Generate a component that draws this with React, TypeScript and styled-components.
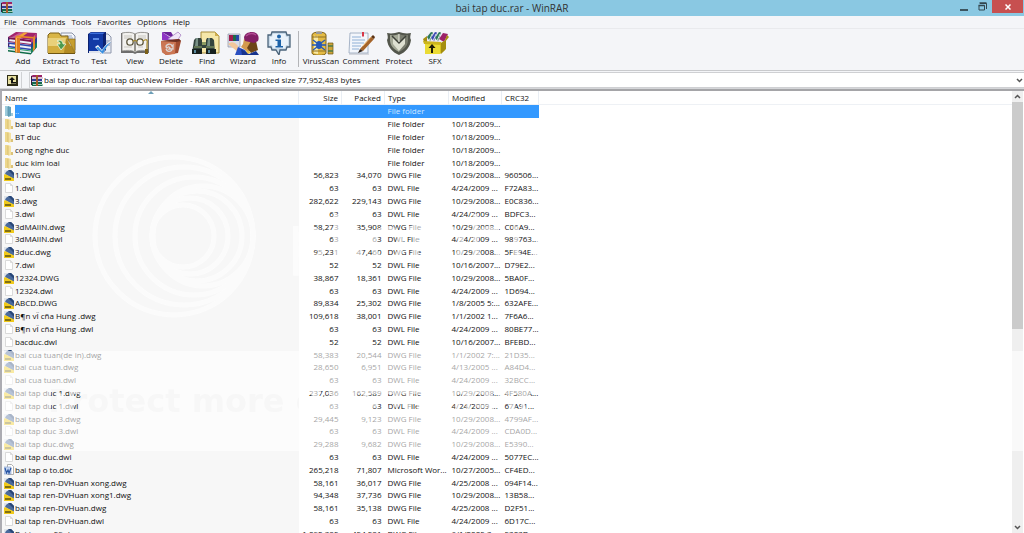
import React from "react";
import styled, { createGlobalStyle, css } from "styled-components";

const GlobalStyle = createGlobalStyle`
  *, *::before, *::after { box-sizing: border-box; }
  body {
    margin: 0;
    background: #f4f5f8;
    color: #111;
    font-family: "Open Sans", "Noto Sans", sans-serif;
    font-size: 8px;
    line-height: 12px;
  }
  button, input { font: inherit; color: inherit; }
`;

const Window = styled.div`
  display: flex;
  flex-direction: column;
  height: 100vh;
  overflow: hidden;
`;

const TitleBar = styled.header`
  display: grid;
  grid-template-columns: 1fr auto 1fr;
  height: 16px;
  flex: none;
  background: #8ac8e2;
`;

const AppIcon = styled.div`
  padding: 2px 1px;
  svg { display: block; }
`;

const Title = styled.h1`
  margin: 0;
  font-size: 10px;
  line-height: 16px;
  font-weight: 400;
  color: #333;
`;

const WindowButtons = styled.div`
  display: flex;
  justify-content: flex-end;
`;

const WindowButton = styled.button<{ $close?: boolean }>`
  width: ${(p) => (p.$close ? 31 : 19)}px;
  height: 13px;
  margin-right: ${(p) => (p.$close ? 1 : 0)}px;
  padding: 0;
  border: 0;
  display: flex;
  align-items: center;
  justify-content: center;
  background: ${(p) => (p.$close ? "#c75050" : "transparent")};
`;

const MenuBar = styled.nav`
  display: flex;
  flex: none;
  height: 12px;
  padding-left: 4px;
  gap: 6px;
`;

const MenuButton = styled.button`
  padding: 0;
  border: 0;
  background: none;
  line-height: 12px;
`;

const Toolbar = styled.div`
  display: flex;
  flex: none;
  height: 43px;
  padding-left: 5px;
  border-top: 1px solid #e9eaed;
  border-bottom: 1px solid #c9cacd;
`;

const ToolButton = styled.button<{ $wide?: boolean }>`
  width: ${(p) => (p.$wide ? 40 : 36)}px;
  padding: 2px 0 0;
  border: 0;
  background: none;
  display: flex;
  flex-direction: column;
  align-items: center;
  white-space: nowrap;
  svg { display: block; width: 32px; height: 24px; flex: none; }
`;

const ToolDivider = styled.div`
  width: 1px;
  margin: 2px 2px 3px 1px;
  background: #b4b5b8;
`;

const AddressBar = styled.div`
  display: flex;
  flex: none;
  height: 18px;
  padding-top: 1px;
  border-bottom: 1px solid #d5d6d9;
`;

const UpButton = styled.button`
  width: 22px;
  margin-right: 7px;
  padding: 0 0 0 4px;
  border: 0;
  border-right: 1px solid #d0d1d4;
  background: none;
  display: flex;
  align-items: center;
  justify-content: center;
`;

const PathField = styled.label`
  display: flex;
  flex: 1;
  align-items: center;
  gap: 1px;
  height: 16px;
  padding: 0 1px;
  border: 1px solid #cfd0d3;
  border-right: 0;
  background: #fff;
  svg { flex: none; }
`;

const PathInput = styled.input`
  flex: 1;
  min-width: 0;
  padding: 0 0 2px;
  border: 0;
  outline: 0;
  height: 14px;
  background: transparent;
`;

const PlainButton = styled.button`
  padding: 0;
  border: 0;
  background: none;
  display: flex;
  align-items: center;
  justify-content: center;
  height: 11px;
  flex: none;
`;

const Content = styled.main`
  display: flex;
  flex: 1;
  min-height: 0;
  position: relative;
  border-top: 2px solid #a5a5a8;
  border-left: 2px solid #acacb2;
  background: #fff;
  overflow: hidden;
`;

const ListPane = styled.div`
  flex: 1;
  overflow: hidden;
  background: linear-gradient(#eef1f5, #eef1f5) 0 13px / 100% 1px no-repeat;
`;

const FileTable = styled.table`
  width: 537px;
  table-layout: fixed;
  border-collapse: collapse;
  white-space: nowrap;
`;

const numeric = css`
  text-align: right;
  padding-right: 3px;
`;

const HeadCell = styled.th<{ $numeric?: boolean }>`
  height: 14px;
  padding: 0 0 0 3px;
  text-align: left;
  font-weight: 400;
  border-right: 1px solid #e9eef4;
  ${(p) => p.$numeric && numeric}
  button {
    padding: 0;
    border: 0;
    background: none;
    line-height: 12px;
    display: inline-block;
    vertical-align: top;
  }
`;

const SortMark = styled.svg`
  position: absolute;
  left: 146px;
  top: 0;
`;

const Row = styled.tr<{ $selected?: boolean }>`
  height: 13px;
  &:nth-child(5n) { height: 12px; }
  td { background: ${(p) => (p.$selected ? "#3399ff" : "transparent")}; }
  td:first-child { background: ${(p) => (p.$selected ? "#fff" : "#f7f7f7")}; }
  color: ${(p) => (p.$selected ? "#cfe6ff" : "#111")};
`;

const Cell = styled.td<{ $numeric?: boolean }>`
  padding: 0 0 0 3px;
  line-height: 12px;
  vertical-align: top;
  ${(p) => p.$numeric && numeric}
`;

const NameCell = styled(Cell)`
  padding-left: 2px;
`;

const FileName = styled.div<{ $selected?: boolean }>`
  display: flex;
  height: ${(p) => (p.$selected ? 13 : 12)}px;
  svg { flex: none; width: 10px; height: 12px; }
  span {
    flex: 1;
    margin-left: 1px;
    background: ${(p) => (p.$selected ? "#3399ff" : "transparent")};
  }
`;

const ScrollBar = styled.div`
  display: flex;
  flex-direction: column;
  width: 11px;
  margin-right: 1px;
  flex: none;
  background: #efefef;
`;

const ScrollTrack = styled.div`
  flex: 1;
`;

const ScrollThumb = styled.div`
  height: 54%;
  background: #cbcbcb;
`;

const Watermark = styled.svg`
  position: absolute;
  left: -2px;
  top: 0;
  width: calc(100% + 2px);
  height: 100%;
  pointer-events: none;
`;

/* ---------- drawings ---------- */

const Books = () => (
  <>
    <path d="M24 9 30 2v14l-6 7z" fill="#2a3f8f" />
    <path d="m24 9 6-7v4l-6 7z" fill="#b23a80" />
    <path d="m24 18 6-7v5l-6 7z" fill="#1c8257" />
    <path d="M1 6 9 1l21 1-6 7z" fill="#a3246b" />
    <path d="m5 6 7-4 4 .3L9 7z" fill="#c95796" />
    <path d="M1 6 24 9v14L1 20z" fill="#eef0f7" />
    <path d="m1 6 23 3v2L1 8z" fill="#7d1450" />
    <path d="M1 10.500 24 13.500" stroke="#8d1f5d" strokeWidth="1.200" />
    <path d="m1 12 23 3M1 15.500l23 3" stroke="#2c47ae" strokeWidth="1.400" />
    <path d="m1 17 23 3" stroke="#2e9a6b" strokeWidth="1" />
    <path d="m1 19 23 3v1.500L1 20.500z" fill="#0d6b46" />
    <path d="M1 6c2 2 2 3 0 5zM1 12c2 1 2 2 0 4z" fill="#43206a" />
    <path d="m8 6.800 9-5.400 4 .2L13 7.500z" fill="#f2a03a" />
    <path d="M8 6.800 13 7.500V22l-5-.7z" fill="#e07b22" />
    <path d="M9.500 7v14.500" stroke="#f7b95e" />
    <path d="M10 4.500 27 6l-1.500 1.500L8 6z" fill="#e88b27" />
    <path d="m26 6.500 2-2.200V18l-2 2.500z" fill="#e38a29" />
  </>
);

const toolIcons: Record<string, React.ReactNode> = {
  Add: <Books />,
  "Extract To": (
    <>
      <path d="M16 2h11l3 3v14H16z" fill="#f4f6fa" stroke="#8b93a8" />
      <path d="M20 5h7M20 7h8M20 9h8" stroke="#9aa9c8" />
      <path d="M3 4 5 2h9l2 3h7v17H3z" fill="#d9b546" stroke="#7c6118" />
      <path d="M3 7h18l9 15H3z" fill="#e9d07a" />
      <path d="M3 15h24l3 7H3z" fill="#d3ad3f" />
      <path d="m21 7 9 15H19z" fill="#b38b24" />
      <path d="M30 8v14l-7-14z" fill="#c79f30" stroke="#7c6118" strokeWidth=".6" />
      <path d="M3 22.500h27" stroke="#6f5511" />
      <path d="M12 10c3-2 6 0 6 3h3l-5 6-4-6h3c0-2-1-2-3-3z" fill="#4c9a4e" stroke="#f0f7e2" strokeWidth=".8" />
    </>
  ),
  Test: (
    <>
      <path d="M17 3h8l3 3v16H17z" fill="#e8ecf3" stroke="#8e96aa" />
      <path d="M22 10h5M22 12h5M22 14h5" stroke="#7683a8" />
      <path d="M5 3 8 1h15v18l-3 3H5z" fill="#0c2170" />
      <path d="M6 3h14v17H6z" fill="#123aa6" />
      <path d="M6 3 8 1.500h14L20 3z" fill="#3d70dd" />
      <path d="M10 7h6v2h-6z" fill="#5c8ae6" />
      <path d="M6 20h14v2H6z" fill="#dfe3ec" />
      <path d="m12 16 3-2 4 5c2-4 5-7 10-10-4 4-7 8-9 15z" fill="#fff" />
      <path d="m13 17 2-1.500 4 4.500c2-4 4-6 9-9-4 4-6 7-8 12z" fill="#3a8fdf" />
    </>
  ),
  View: (
    <>
      <path d="M2 2h1l1 18h10l2 1 2-1h10l1-18h1v20H18l-2 1-2-1H2z" fill="#6d6d6d" />
      <path d="M3 2c5-1 10-1 13 1 3-2 8-2 13-1v18c-5-1-10-1-13 1-3-2-8-2-13-1z" fill="#f2f1ee" stroke="#807f7b" strokeWidth=".8" />
      <path d="M16 3v17" stroke="#77746d" strokeWidth="1.500" />
      <path d="M5 5h8M5 7h8M19 5h8M19 7h8M5 16h8M19 16h5" stroke="#c9c7c1" />
      <g fill="#f7f6f0" stroke="#5b553e" strokeWidth="1.300">
        <circle cx="11" cy="11" r="3.200" />
        <circle cx="21" cy="11" r="3.200" />
      </g>
      <path d="M14 10.500q2-2 4 0M24 10c3-2 5-2 4 3v7" fill="none" stroke="#a78927" strokeWidth="1.200" />
      <path d="M26 18h3v5h-3z" fill="#7c6118" />
    </>
  ),
  Delete: (
    <>
      <path d="m7 1 12 8H7z" fill="#8e35c4" />
      <path d="m7 1 9 0 5 8z" fill="#6b2299" />
      <path d="m13 8 10-7 3 3-4 6z" fill="#f0e6f8" stroke="#a075bd" strokeWidth=".7" />
      <path d="M6 10 24 8l2 2-3 12-12 2-4-3z" fill="#a04c30" />
      <path d="M6 10h15l-1 13-9 1-4-3z" fill="#cb7653" />
      <path d="M6 10 24 8l2 2-5 1z" fill="#6c3021" />
      <path d="M11 16c0-3 5-4 6-1l1-1v4h-4l1-1c-1-2-2-1-3 0zM11 18c1 3 4 3 6 1" fill="none" stroke="#dcd6d6" strokeWidth="1.300" />
    </>
  ),
  Find: (
    <>
      <path d="M10 1h14l4 4v17H10z" fill="#f5e7a9" stroke="#a88d3a" />
      <path d="M24 1v4h4z" fill="#cfae4f" />
      <path d="M3 9 5 7h5l1 2v5h4V9l1-2h5l2 2 1 13h-9v-5h-4v5H1z" fill="#34443e" />
      <path d="M5 7h2v8H4zM17 7h2v8h-3z" fill="#789085" />
      <path d="M1 18h10v5H1zM15 18h10v5H15z" fill="#17211e" />
      <path d="M3 19h2v3H3zM17 19h2v3h-2z" fill="#5a8a9e" />
      <path d="M11 11h4v3h-4z" fill="#8d9c62" />
      <path d="M3 16h8M15 16h8" stroke="#91a86a" />
    </>
  ),
  Wizard: (
    <>
      <path d="M1 3h12v13H1z" fill="#d9dde8" stroke="#8c93a5" strokeWidth=".7" />
      <path d="M2 4h4v6H2z" fill="#a01c4e" />
      <path d="M6 4h3v6H6z" fill="#1c6b47" />
      <path d="M9 4h3v6H9z" fill="#2846a8" />
      <path d="M1 13c4-3 7-2 10 2v6z" fill="#f2c79a" />
      <path d="m17 8 9 1 1 9-6 3-7-5 2-3z" fill="#d39a4e" />
      <path d="M24 10h5l2 9-7 3-4-5z" fill="#6d4517" />
      <path d="M17 7c0-4 4-6 8-6 5 0 8 4 6 9l-4 2-9-2z" fill="#831f66" />
      <path d="M19 5c3-3 7-3 10-1" fill="none" stroke="#b24b94" strokeWidth="1.500" />
      <path d="m8 24 3-8 7 3 4 5z" fill="#2a4fc0" />
      <path d="m14 18 8 5 7-3 3 4H15z" fill="#17338d" />
      <path d="m18 19 3 4 3-2z" fill="#e9c14a" />
    </>
  ),
  Info: (
    <>
      <path d="M9 1 8 4H5v12h3l1 3h4l3 5 1-5h6l1-3h3V4h-3l-1-3z" fill="#c9dbea" stroke="#4a6379" strokeWidth="1.300" />
      <path d="M10 3 9 6H7v8h2l1 3h12l1-3h2V6h-2l-1-3z" fill="#e9f2fa" />
      <circle cx="16" cy="5.500" r="2" fill="#1d63a8" />
      <path d="M12.500 8.500H18v6.500h2v1.500h-7.500V15h2v-5h-2z" fill="#1d63a8" />
    </>
  ),
  VirusScan: (
    <>
      <path d="M7 4c0-4 14-4 14 0v18c0 3-14 3-14 0z" fill="#e4bb45" stroke="#7d6118" />
      <path d="M9 4c1 2 4 2 4 0v19c-2 0-4-1-4-1z" fill="#f8e9a4" />
      <path d="M7 6h14M7 20h14" stroke="#8e7024" />
      <path d="M11 1h6v2h-6z" fill="#9a9a9a" />
      <path d="M23 12h5v11h-5z" fill="#cda438" stroke="#6f5716" strokeWidth=".7" />
      <path d="M23 15h5M23 20h5" stroke="#497a4a" strokeWidth="1.500" />
      <ellipse cx="14" cy="14" rx="3" ry="4" fill="#2458b8" />
      <path d="m8 9 4 3m8-3-4 3M7 14h14M8 19l4-3m8 3-4-3" stroke="#2458b8" strokeWidth="1.300" />
    </>
  ),
  Comment: (
    <>
      <path d="M5 2h18v20H4z" fill="#f3f6fb" stroke="#93a3ba" strokeWidth=".8" />
      <path d="M7 6h9M7 9h13M7 12h12M7 15h9M7 18h7" stroke="#8fb0d6" />
      <path d="M17 1h2v5l-1-1-1 1z" fill="#d8394a" />
      <path d="m15 18 11-12 3 2-11 12z" fill="#a5642a" />
      <path d="m26 6 2-2 2 2-1 2z" fill="#5b3211" />
      <path d="m15 18-2 4 5-2z" fill="#2d2119" />
      <path d="m18 15 8-9" stroke="#e6b169" />
      <path d="M4 23h20" stroke="#b5bac4" />
    </>
  ),
  Protect: (
    <>
      <path d="M4 2c5 1 8 0 12-1 4 1 7 2 12 1-1 4-1 5 0 7-1 7-5 12-12 15C9 21 5 16 4 9c1-2 1-3 0-7z" fill="#53564c" />
      <path d="M7 4c4 1 6 0 9-1v18C10 18 7 14 7 9z" fill="#a5a997" />
      <path d="M25 4c-4 1-6 0-9-1v18c6-3 9-7 9-12z" fill="#7a7d6f" />
      <path d="m10 6 6 6 6-6v7l-6 7-6-7z" fill="#dfe1d2" />
      <path d="m9 5 7 7 7-7" fill="none" stroke="#3e4139" strokeWidth="1.500" />
      <path d="M16 3v8" stroke="#e9eadf" />
    </>
  ),
  SFX: (
    <>
      <path d="m7 5 4-4 16 1-2 9H8z" fill="#efe9f4" />
      <path d="m8 6 4-5 2 .5-3 9zM16 7l4-6 2 .5-3 9z" fill="#2d7a58" />
      <path d="m12 7 4-6 2 .5-3 9z" fill="#3d4cb4" />
      <path d="m20 8 4-6 5 1-4 8z" fill="#9c2268" />
      <path d="m13 3-3 7M17 3l-3 7M21 3l-3 7" stroke="#fff" strokeWidth=".8" />
      <path d="M4 8 8 5v6H5zM26 9l2-5 2 2-4 5z" fill="#a78f12" />
      <path d="m6 12 16 0 5-3-1 10-5 4-15-1z" fill="#d6bf1d" />
      <path d="M6 12h15v11H6z" fill="#eadb34" />
      <path d="m4 10 18 1v3L5 13z" fill="#ccb51c" />
      <path d="m22 12 5-3v9l-5 5z" fill="#a48e0f" />
      <path d="m13 13 3.500 4H14v5h-2v-5H9.500z" fill="#1d1a06" />
    </>
  ),
};

const BooksIcon = () => (
  <svg width="12" height="11" viewBox="0 0 12 11" aria-hidden="true">
    <path d="M0 1 2 0h9v3H1z" fill="#9b2367" />
    <path d="M1 2h11v2H1z" fill="#d9c4d3" />
    <path d="M0 4h11v2H1z" fill="#2c3f96" />
    <path d="M1 6h11v1H1z" fill="#c9cfe6" />
    <path d="M0 7h11v3l1 1H1z" fill="#12684b" />
    <path d="M2 9h10v1H2z" fill="#a9cdb9" />
    <path d="M5 0h2v11H5z" fill="#a35a2a" />
    <path d="M0 1h1v9H0z" fill="#3b1c3f" />
  </svg>
);

type Kind = "up" | "folder" | "dwg" | "dwl" | "doc";

const FileIcon = ({ kind }: { kind: Kind }) => (
  <svg viewBox="0 0 10 12" aria-hidden="true">
    {(kind === "up" || kind === "folder") && (
      <>
        <path d="M1 1h4v10H1z" fill={kind === "up" ? "#9ccbdc" : "#edd78c"} />
        <path d="M4 1l3 1v9l-3 1z" fill={kind === "up" ? "#65a3bd" : "#f3e0a0"} />
        <path d="M4 2v9" stroke={kind === "up" ? "#5b93a8" : "#d3b764"} strokeWidth=".8" />
        <path d="M7 8h2v3H7z" fill={kind === "up" ? "#9fc8da" : "#dcc379"} />
      </>
    )}
    {kind === "dwg" && (
      <>
        <path d="M0 1h7l3 3v8H0z" fill="#dfe4ea" />
        <path d="M1 5c1-3 3-4 6-4l3 3v6z" fill="#4a6a9c" />
        <path d="M4 1h3l3 3v3z" fill="#284677" />
        <path d="M0 6l1-1 9 4.500V12H0z" fill="#f0ca1b" />
        <path d="M1 10h6" stroke="#5d5210" strokeWidth="1.500" />
      </>
    )}
    {kind === "dwl" && (
      <path d="M1.500 1.500h5l2 2v7h-7zM6.500 1.500v2h2" fill="#fff" stroke="#d2d2d2" strokeWidth=".8" />
    )}
    {kind === "doc" && (
      <>
        <path d="M3.500.5h4l2 2v8h-6z" fill="#fff" stroke="#9c9c9c" strokeWidth=".8" />
        <path d="M0 3h7v7H0z" fill="#c8d8f1" stroke="#7f9cc9" strokeWidth=".6" />
        <path d="m1 4 1.500 5L4 6l1 3 2-5" fill="none" stroke="#2754a3" strokeWidth="1.200" />
      </>
    )}
  </svg>
);

const Chevron = ({ up }: { up?: boolean }) => (
  <svg width="7" height="5" viewBox="0 0 7 5" aria-hidden="true">
    <path d={up ? "M1 4l2.500-2.500L6 4" : "M1 1l2.500 2.500L6 1"} fill="none" stroke="#555" strokeWidth="1.500" />
  </svg>
);

/* ---------- data ---------- */

type Entry = [Kind, string, string, string, string, string, string];

const entries: Entry[] = [
  ["up", "..", "", "", "File folder", "", ""],
  ["folder", "bai tap duc", "", "", "File folder", "10/18/2009...", ""],
  ["folder", "BT duc", "", "", "File folder", "10/18/2009...", ""],
  ["folder", "cong nghe duc", "", "", "File folder", "10/18/2009...", ""],
  ["folder", "duc kim loai", "", "", "File folder", "10/18/2009...", ""],
  ["dwg", "1.DWG", "56,823", "34,070", "DWG File", "10/29/2008...", "960506..."],
  ["dwl", "1.dwl", "63", "63", "DWL File", "4/24/2009 ...", "F72A83..."],
  ["dwg", "3.dwg", "282,622", "229,143", "DWG File", "10/29/2008...", "E0C836..."],
  ["dwl", "3.dwl", "63", "63", "DWL File", "4/24/2009 ...", "BDFC3..."],
  ["dwg", "3dMAIIN.dwg", "58,273", "35,908", "DWG File", "10/29/2008...", "C06A9..."],
  ["dwl", "3dMAIIN.dwl", "63", "63", "DWL File", "4/24/2009 ...", "989763..."],
  ["dwg", "3duc.dwg", "95,231", "47,460", "DWG File", "10/29/2008...", "5FE94E..."],
  ["dwl", "7.dwl", "52", "52", "DWL File", "10/16/2007...", "D79E2..."],
  ["dwg", "12324.DWG", "38,867", "18,361", "DWG File", "10/29/2008...", "5BA0F..."],
  ["dwl", "12324.dwl", "63", "63", "DWL File", "4/24/2009 ...", "1D694..."],
  ["dwg", "ABCD.DWG", "89,834", "25,302", "DWG File", "1/8/2005 5:...", "632AFE..."],
  ["dwg", "B¶n vÏ cña Hung .dwg", "109,618", "38,001", "DWG File", "1/1/2002 1...", "7F6A6..."],
  ["dwl", "B¶n vÏ cña Hung .dwl", "63", "63", "DWL File", "4/24/2009 ...", "80BE77..."],
  ["dwl", "bacduc.dwl", "52", "52", "DWL File", "10/16/2007...", "BFEBD..."],
  ["dwg", "bai cua tuan(de in).dwg", "58,383", "20,544", "DWG File", "1/1/2002 7:...", "21D35..."],
  ["dwg", "bai cua tuan.dwg", "28,650", "6,951", "DWG File", "4/13/2005 ...", "A84D4..."],
  ["dwl", "bai cua tuan.dwl", "63", "63", "DWL File", "4/24/2009 ...", "32BCC..."],
  ["dwg", "bai tap duc 1.dwg", "237,036", "162,589", "DWG File", "10/29/2008...", "4F580A..."],
  ["dwl", "bai tap duc 1.dwl", "63", "63", "DWL File", "4/24/2009 ...", "67A91..."],
  ["dwg", "bai tap duc 3.dwg", "29,445", "9,123", "DWG File", "10/29/2008...", "4799AF..."],
  ["dwl", "bai tap duc 3.dwl", "63", "63", "DWL File", "4/24/2009 ...", "CDA0D..."],
  ["dwg", "bai tap duc.dwg", "29,288", "9,682", "DWG File", "10/29/2008...", "E5390..."],
  ["dwl", "bai tap duc.dwl", "63", "63", "DWL File", "4/24/2009 ...", "5077EC..."],
  ["doc", "bai tap o to.doc", "265,218", "71,807", "Microsoft Wor...", "10/27/2005...", "CF4ED..."],
  ["dwg", "bai tap ren-DVHuan xong.dwg", "58,161", "36,017", "DWG File", "4/25/2008 ...", "094F14..."],
  ["dwg", "bai tap ren-DVHuan xong1.dwg", "94,348", "37,736", "DWG File", "10/29/2008...", "13B58..."],
  ["dwg", "bai tap ren-DVHuan.dwg", "58,161", "35,138", "DWG File", "4/25/2008 ...", "D2F51..."],
  ["dwl", "bai tap ren-DVHuan.dwl", "63", "63", "DWL File", "4/24/2009 ...", "6D17C..."],
  ["dwg", "Bai tap co 59.dwg", "1,092,385", "454,581", "DWG File", "6/1/2005 3:...", "5303D..."],
];

const columns: { label: string; width?: number; numeric?: boolean }[] = [
  { label: "Name" },
  { label: "Size", width: 43, numeric: true },
  { label: "Packed", width: 43, numeric: true },
  { label: "Type", width: 64 },
  { label: "Modified", width: 53 },
  { label: "CRC32", width: 37 },
];

const menus = ["File", "Commands", "Tools", "Favorites", "Options", "Help"];
const mainTools = ["Add", "Extract To", "Test", "View", "Delete", "Find", "Wizard", "Info"];
const extraTools = ["VirusScan", "Comment", "Protect", "SFX"];

/* Circles sharing the right edge, then circles sharing the left edge: [cx, r] */
const rings = [[174, 79], [184, 69], [194, 59], [203, 50], [183, 31], [190, 38], [197, 45]];

const Tool = ({ name }: { name: string }) => (
  <ToolButton type="button" $wide={name === "Extract To" || name === "Comment" || name === "VirusScan"}>
    <svg viewBox="0 0 32 24" aria-hidden="true">{toolIcons[name]}</svg>
    <span>{name}</span>
  </ToolButton>
);

export default function App() {
  return (
    <Window>
      <GlobalStyle />
      <TitleBar>
        <AppIcon><BooksIcon /></AppIcon>
        <Title>bai tap duc.rar - WinRAR</Title>
        <WindowButtons>
          <WindowButton type="button" aria-label="Minimize">
            <svg width="8" height="11" viewBox="0 0 8 11"><path d="M0 9h8" stroke="#3c5560" strokeWidth="2" /></svg>
          </WindowButton>
          <WindowButton type="button" aria-label="Restore">
            <svg width="9" height="9" viewBox="0 0 9 9">
              <path d="M2 1.500h6.500V7M1 3.500h5.500v4.500H1z" fill="none" stroke="#33464f" />
              <path d="M1.500 1h7M.5 3.500h6" stroke="#33464f" strokeWidth="1.500" />
            </svg>
          </WindowButton>
          <WindowButton type="button" aria-label="Close" $close>
            <svg width="6" height="6" viewBox="0 0 6 6"><path d="M.5.5l5 5M5.500.5l-5 5" stroke="#fff" strokeWidth="1.500" /></svg>
          </WindowButton>
        </WindowButtons>
      </TitleBar>

      <MenuBar aria-label="Menu">
        {menus.map((m) => <MenuButton type="button" key={m}>{m}</MenuButton>)}
      </MenuBar>

      <Toolbar>
        {mainTools.map((t) => <Tool key={t} name={t} />)}
        <ToolDivider />
        {extraTools.map((t) => <Tool key={t} name={t} />)}
      </Toolbar>

      <AddressBar>
        <UpButton type="button" aria-label="Up one level">
          <svg width="11" height="11" viewBox="0 0 11 11">
            <path d="M0 0h11v11H0z" fill="#2e2c16" />
            <path d="M1 1h8v8H1z" fill="#e6dfa0" />
            <path d="M5 2l3 3H6v2h3v1.500H4V5H2z" fill="#111" />
          </svg>
        </UpButton>
        <PathField>
          <BooksIcon />
          <PathInput
            aria-label="Path"
            readOnly
            value={"bai tap duc.rar\\bai tap duc\\New Folder - RAR archive, unpacked size 77,952,483 bytes"}
          />
          <PlainButton type="button" aria-label="Show paths"><Chevron /></PlainButton>
        </PathField>
      </AddressBar>

      <Content>
        <ListPane>
          <FileTable>
            <colgroup>
              {columns.map((c) => <col key={c.label} width={c.width} />)}
            </colgroup>
            <thead>
              <tr>
                {columns.map((c) => (
                  <HeadCell key={c.label} scope="col" $numeric={c.numeric}>
                    <button type="button">{c.label}</button>
                  </HeadCell>
                ))}
              </tr>
            </thead>
            <tbody>
              {entries.map(([kind, name, size, packed, type, modified, crc]) => {
                const selected = kind === "up";
                return (
                  <Row key={name} $selected={selected}>
                    <NameCell>
                      <FileName $selected={selected}><FileIcon kind={kind} /><span>{name}</span></FileName>
                    </NameCell>
                    <Cell $numeric>{size}</Cell>
                    <Cell $numeric>{packed}</Cell>
                    <Cell>{type}</Cell>
                    <Cell>{modified}</Cell>
                    <Cell>{crc}</Cell>
                  </Row>
                );
              })}
            </tbody>
          </FileTable>
        </ListPane>
        <SortMark width="6" height="3" viewBox="0 0 6 3" aria-hidden="true">
          <path d="M0 3l3-3 3 3z" fill="#6d9fb8" />
        </SortMark>
        <ScrollBar>
          <PlainButton type="button" aria-label="Scroll up"><Chevron up /></PlainButton>
          <ScrollTrack><ScrollThumb /></ScrollTrack>
          <PlainButton type="button" aria-label="Scroll down"><Chevron /></PlainButton>
        </ScrollBar>
        <Watermark aria-hidden="true">
          <defs>
            <mask id="band">
              <rect y="260" width="100%" height="100" fill="#fff" />
              <text x="48" y="321" fontFamily="DejaVu Sans" fontWeight="700" fontSize="32" fill="#000">
                Protect more of your memories for less!
              </text>
            </mask>
          </defs>
          <g fill="none" stroke="#fff" strokeWidth="5" opacity=".6">
            {rings.map(([cx, r]) => <circle key={cx} cx={cx} cy="145" r={r} />)}
          </g>
          <text x="288" y="171" fontFamily="Inter" fontSize="66" fill="#fff" fillOpacity=".6">photobucket</text>
          <rect y="260" width="100%" height="100" fill="#fff" fillOpacity=".6" mask="url(#band)" />
        </Watermark>
      </Content>
    </Window>
  );
}
